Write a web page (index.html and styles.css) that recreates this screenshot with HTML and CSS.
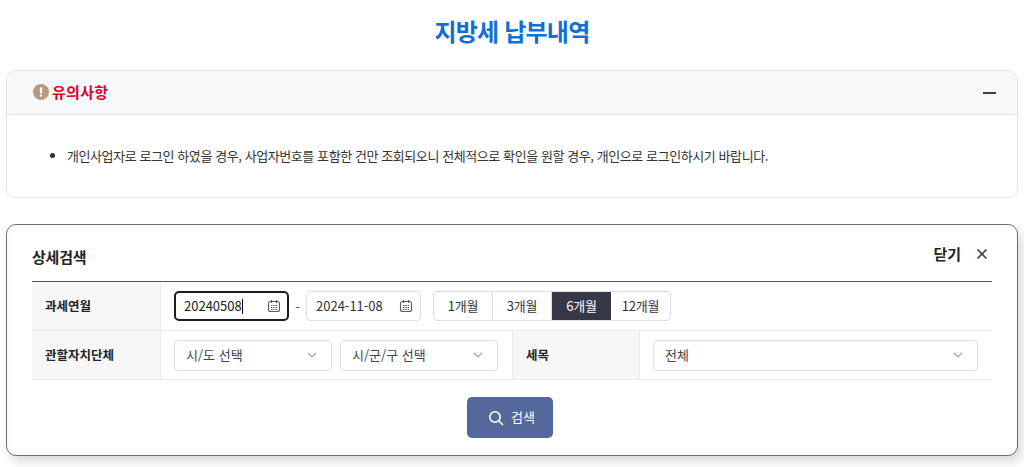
FILE: index.html
```html
<!DOCTYPE html>
<html lang="ko">
<head>
<meta charset="utf-8">
<title>지방세 납부내역</title>
<link rel="stylesheet" href="styles.css">
</head>
<body>
<h1 class="title">지방세 납부내역</h1>
<section class="notice">
  <header class="notice-head">
    <div class="notice-title">
      <svg class="warn" viewBox="0 0 16 16" width="16" height="16"><circle cx="8" cy="8" r="8" fill="#b89a80"/><rect x="6.9" y="3.2" width="2.2" height="6.2" rx="1" fill="#fff"/><circle cx="8" cy="11.6" r="1.2" fill="#fff"/></svg>
      <span>유의사항</span>
    </div>
    <span class="minus"></span>
  </header>
  <div class="notice-body">
    <ul>
      <li>개인사업자로 로그인 하였을 경우, 사업자번호를 포함한 건만 조회되오니 전체적으로 확인을 원할 경우, 개인으로 로그인하시기 바랍니다.</li>
    </ul>
  </div>
</section>
<section class="search">
  <div class="search-head">
    <h2>상세검색</h2>
    <div class="close"><span>닫기</span>
      <svg viewBox="0 0 12 12" width="12" height="12"><path d="M1.5 1.5l9 9M10.5 1.5l-9 9" stroke="#3a3d4d" stroke-width="1.6" fill="none"/></svg>
    </div>
  </div>
  <div class="table">
    <div class="row">
      <div class="th first">과세연월</div>
      <div class="td">
        <div class="date focus"><span class="val">20240508<i class="caret"></i></span>
          <svg class="cal" viewBox="0 0 14 14" width="14" height="14"><rect x="1.5" y="2.5" width="11" height="10" rx="2" fill="none" stroke="#555a66" stroke-width="1.1"/><path d="M4.5 1v3M9.5 1v3" stroke="#555a66" stroke-width="1.1"/><path d="M4 6.5h6M4 8.5h6M4 10.5h6" stroke="#555a66" stroke-width="1" stroke-dasharray="1.4 .9"/></svg>
        </div>
        <span class="dash">-</span>
        <div class="date"><span class="val">2024-11-08</span>
          <svg class="cal" viewBox="0 0 14 14" width="14" height="14"><rect x="1.5" y="2.5" width="11" height="10" rx="2" fill="none" stroke="#555a66" stroke-width="1.1"/><path d="M4.5 1v3M9.5 1v3" stroke="#555a66" stroke-width="1.1"/><path d="M4 6.5h6M4 8.5h6M4 10.5h6" stroke="#555a66" stroke-width="1" stroke-dasharray="1.4 .9"/></svg>
        </div>
        <div class="months">
          <span class="m m1">1개월</span><span class="m m3">3개월</span><span class="m m6 on">6개월</span><span class="m m12">12개월</span>
        </div>
      </div>
    </div>
    <div class="row">
      <div class="th first">관할자치단체</div>
      <div class="td region">
        <div class="sel s1"><span>시/도 선택</span><svg viewBox="0 0 10 6" width="10" height="6"><path d="M1 1l4 4 4-4" fill="none" stroke="#9a9ea6" stroke-width="1.1"/></svg></div>
        <div class="sel s1"><span>시/군/구 선택</span><svg viewBox="0 0 10 6" width="10" height="6"><path d="M1 1l4 4 4-4" fill="none" stroke="#9a9ea6" stroke-width="1.1"/></svg></div>
      </div>
      <div class="th second">세목</div>
      <div class="td last">
        <div class="sel s2"><span>전체</span><svg viewBox="0 0 10 6" width="10" height="6"><path d="M1 1l4 4 4-4" fill="none" stroke="#9a9ea6" stroke-width="1.1"/></svg></div>
      </div>
    </div>
  </div>
  <div class="actions">
    <button class="btn" type="button">
      <svg viewBox="0 0 16 16" width="16" height="16"><circle cx="7" cy="7" r="5.2" fill="none" stroke="#fff" stroke-width="1.6"/><path d="M11 11l4 4" stroke="#fff" stroke-width="1.6"/></svg>
      <span class="btn-label">검색</span>
    </button>
  </div>
</section>
</body>
</html>
```
FILE: styles.css
```css
* { box-sizing: border-box; }
html, body { margin: 0; padding: 0; }
body {
  width: 1024px;
  height: 467px;
  overflow: hidden;
  background: #fff;
  color: #222;
  font-family: "Noto Sans CJK KR", "Noto Sans", sans-serif;
  font-size: 13px;
  padding: 0 6px;
}
.title {
  margin: 0;
  height: 70px;
  padding-top: 13px;
  text-align: center;
  font-size: 24px;
  line-height: 36px;
  font-weight: 700;
  color: #0f6fd3;
  letter-spacing: -0.8px;
}
.notice {
  height: 128px;
  border: 1px solid #e4e5e8;
  border-radius: 10px;
  overflow: hidden;
}
.notice-head {
  height: 44px;
  background: #f7f8fa;
  border-bottom: 1px solid #e4e5e8;
  display: flex;
  align-items: center;
  justify-content: space-between;
  padding: 0 21px 0 26px;
}
.notice-title {
  display: flex;
  align-items: center;
  gap: 3px;
  font-size: 15px;
  font-weight: 700;
  color: #e5002d;
  letter-spacing: 0.3px;
  line-height: 20px;
  padding-bottom: 2px;
}
.minus {
  width: 13px;
  height: 2px;
  background: #3a3d50;
}
.notice-body { padding: 30px 0 0 0; }
.notice-body ul { margin: 0; padding: 0 0 0 60px; }
.notice-body li {
  font-size: 13px;
  line-height: 22px;
  color: #333;
  letter-spacing: -0.42px;
}
.search {
  margin-top: 26px;
  height: 232px;
  border: 1px solid #6b6d75;
  border-radius: 10px;
  background: #fff;
  padding: 0 25px;
  box-shadow: 4px 6px 10px rgba(0, 0, 0, 0.14);
}
.search-head {
  height: 57px;
  display: flex;
  align-items: flex-start;
  justify-content: space-between;
  padding-top: 21px;
  border-bottom: 1px solid #55565e;
}
.search-head h2 {
  margin: 0;
  font-size: 15px;
  line-height: 22px;
  font-weight: 700;
  color: #222;
  letter-spacing: -0.2px;
}
.close {
  display: flex;
  align-items: center;
  gap: 15px;
  font-size: 15px;
  line-height: 16px;
  font-weight: 700;
  padding-right: 4px;
}
.row {
  display: flex;
  height: 49px;
  border-bottom: 1px solid #ececee;
}
.th {
  background: #f7f7f8;
  display: flex;
  align-items: center;
  font-size: 12.5px;
  font-weight: 700;
  color: #222;
  border-right: 1px solid #ececee;
  padding-bottom: 1px;
}
.th.first { width: 129px; padding-left: 13px; }
.th.second { width: 128px; padding-left: 13px; border-left: 1px solid #ececee; }
.td {
  display: flex;
  align-items: center;
  padding-left: 13px;
}
.date {
  width: 115px;
  height: 30px;
  border: 1px solid #dcdde0;
  border-radius: 4px;
  display: flex;
  align-items: center;
  justify-content: space-between;
  padding: 0 7px 1px 9px;
  font-size: 13px;
  color: #333;
}
.date.focus {
  border: 2px solid #1c1c22;
  border-radius: 5px;
  padding: 0 6px 1px 8px;
  color: #222;
}
.caret {
  display: inline-block;
  width: 1px;
  height: 15px;
  background: #000;
  vertical-align: -3px;
}
.dash {
  width: 17px;
  text-align: center;
  color: #555;
  font-size: 13px;
}
.months {
  display: flex;
  margin-left: 12px;
  height: 30px;
  border: 1px solid #dcdde0;
  border-radius: 4px;
  overflow: hidden;
}
.m {
  display: flex;
  align-items: center;
  justify-content: center;
  font-size: 13px;
  letter-spacing: -0.2px;
  color: #333;
  border-right: 1px solid #dcdde0;
  width: 59px;
  padding-bottom: 1px;
}
.m.m12 { border-right: 0; width: 59px; }
.m.on { background: #363848; color: #fff; border-right: 0; }
.region { width: 351px; gap: 8px; }
.sel {
  height: 31px;
  border: 1px solid #dcdde0;
  border-radius: 4px;
  display: flex;
  align-items: center;
  justify-content: space-between;
  padding: 0 14px 1px 11px;
  font-size: 13px;
  color: #444;
}
.s1 { width: 158px; }
.s2 { width: 325px; }
.actions {
  display: flex;
  justify-content: center;
  padding-top: 17px;
  padding-right: 4px;
}
.btn {
  width: 86px;
  height: 41px;
  background: #55689b;
  border: 0;
  border-radius: 5px;
  color: #fff;
  display: flex;
  align-items: center;
  justify-content: center;
  gap: 7px;
  padding: 0 0 0 3px;
  font-family: inherit;
  font-size: 13px;
}
.btn-label { margin-bottom: 3px; }
```
